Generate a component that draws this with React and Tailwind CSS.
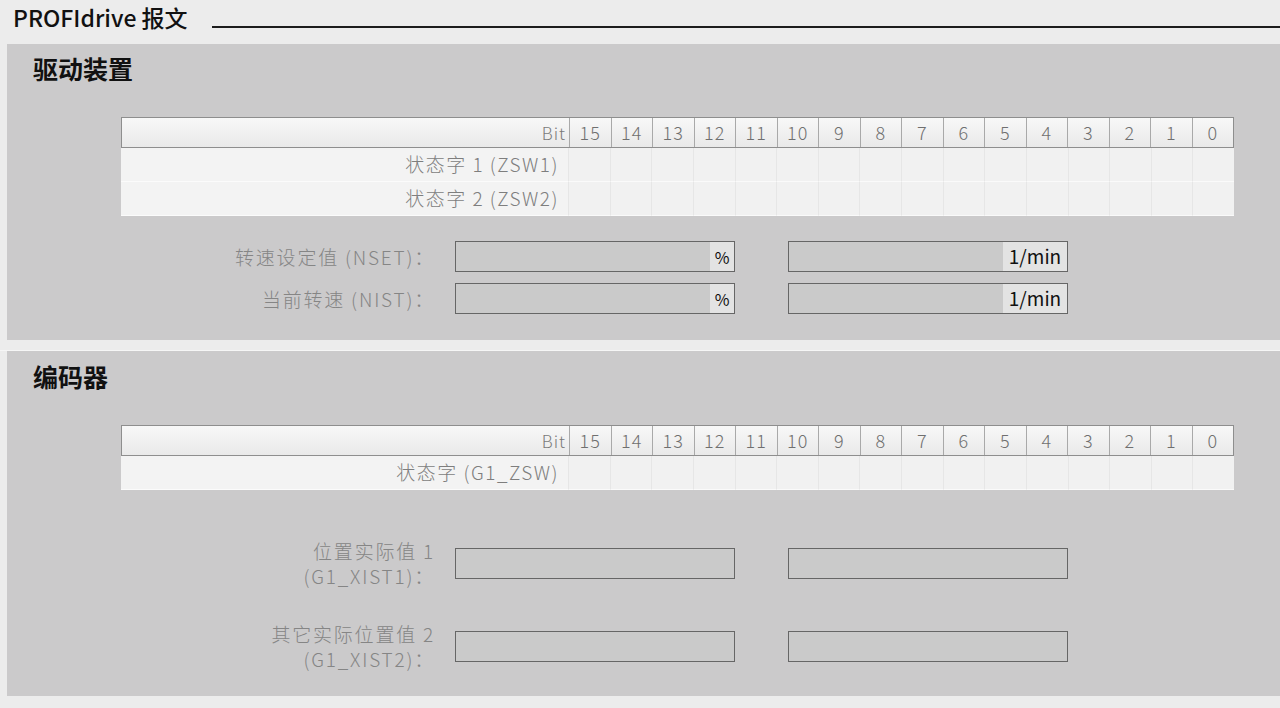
import React from "react";

const FONT = { fontFamily: '"Noto Sans CJK SC", "Noto Sans", sans-serif' };
const bits = [15, 14, 13, 12, 11, 10, 9, 8, 7, 6, 5, 4, 3, 2, 1, 0];

function BitTable({ rows }) {
  return (
    <div className="ml-[114px] w-[1113px] flex flex-col">
      <div className="grid grid-cols-[447px_repeat(16,1fr)] h-[31px] border border-[#8e8e8e] bg-gradient-to-b from-[#f8f8f8] to-[#e9e9e9]">
        <div className="flex items-center justify-end pr-[3px] text-[17px] tracking-[1px] font-light text-[#7a7a7a]">Bit</div>
        {bits.map((b) => (
          <div key={b} className="flex items-center justify-center border-l border-[#a9a9a9] text-[18px] tracking-[1px] font-light text-[#6f6f6f]">
            {b}
          </div>
        ))}
      </div>
      {rows.map((r, i) => (
        <div key={i} className="grid grid-cols-[447px_repeat(16,1fr)] h-[34px] bg-[#f3f3f3]">
          <div className="flex items-center justify-end pr-[9px] text-[19px] tracking-[1.5px] font-light text-[#7e7e7e] border-b border-[#fbfbfb]">{r}</div>
          {bits.map((b) => (
            <div key={b} className="border-l border-[#e6e6e6] border-b border-b-[#fafafa] bg-[#f1f1f1]" />
          ))}
        </div>
      ))}
    </div>
  );
}

function Field({ unit, unitW }) {
  return (
    <div className="w-[280px] h-[31px] border border-[#666] bg-[#cacaca] flex justify-end">
      {unit && (
        <div className={`${unitW} h-full bg-[#e3e3e3] flex items-center justify-center text-[#111]`}>{unit}</div>
      )}
    </div>
  );
}

function InputRow({ label, unitA, unitB }) {
  return (
    <div className="flex items-center">
      <div className="w-[428px] text-right text-[19px] tracking-[1.8px] font-light leading-[25px] text-[#858585]">{label}</div>
      <div className="w-[20px]" />
      <Field unit={unitA} unitW="w-[24px] text-[16px]" />
      <div className="w-[53px]" />
      <Field unit={unitB} unitW="w-[64px] text-[19px]" />
    </div>
  );
}

export default function App() {
  return (
    <div style={FONT} className="w-[1280px] h-[708px] bg-[#ececec] flex flex-col overflow-hidden">
      <div className="h-[44px] flex shrink-0">
        <div className="ml-[13px] mt-[3px] leading-[28px] text-[23px] font-medium text-[#111]">PROFIdrive 报文</div>
        <div className="ml-[24px] mt-[26px] h-[2px] flex-1 bg-[#1c1c1c]" />
      </div>

      <div className="ml-[7px] h-[296px] shrink-0 bg-[#cbcacb] flex flex-col">
        <div className="ml-[26px] mt-[9px] leading-[30px] text-[25px] font-bold text-[#111]">驱动装置</div>
        <div className="mt-[34px]">
          <BitTable rows={["状态字 1 (ZSW1)", "状态字 2 (ZSW2)"]} />
        </div>
        <div className="mt-[25px] flex flex-col gap-[11px]">
          <InputRow label="转速设定值 (NSET)：" unitA="%" unitB="1/min" />
          <InputRow label="当前转速 (NIST)：" unitA="%" unitB="1/min" />
        </div>
      </div>

      <div className="h-[11px] shrink-0 border-b border-[#f6f6f6]" />

      <div className="ml-[7px] h-[345px] shrink-0 bg-[#cbcacb] flex flex-col">
        <div className="ml-[26px] mt-[10px] leading-[30px] text-[25px] font-bold text-[#111]">编码器</div>
        <div className="mt-[34px]">
          <BitTable rows={["状态字 (G1_ZSW)"]} />
        </div>
        <div className="mt-[48px] flex flex-col gap-[33px]">
          <InputRow label={<>位置实际值 1<br />(G1_XIST1)：</>} />
          <InputRow label={<>其它实际位置值 2<br />(G1_XIST2)：</>} />
        </div>
      </div>
    </div>
  );
}
